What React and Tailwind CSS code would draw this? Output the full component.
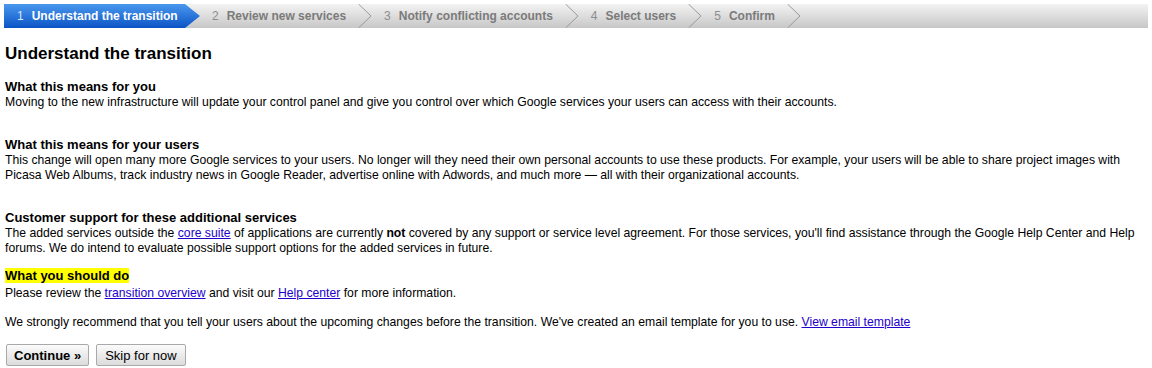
const steps = [
  { n: 1, label: 'Understand the transition' },
  { n: 2, label: 'Review new services' },
  { n: 3, label: 'Notify conflicting accounts' },
  { n: 4, label: 'Select users' },
  { n: 5, label: 'Confirm' },
]

function Chevron() {
  return (
    <svg width="14" height="24" viewBox="0 0 14 24" className="shrink-0">
      <path d="M0.5 0 L13 12 L0.5 24" fill="none" stroke="#9a9a9a" strokeWidth="1" />
    </svg>
  )
}

function Stepper({ current }) {
  return (
    <div className="mx-[4px] mt-[4px] h-[24px] flex items-stretch bg-gradient-to-b from-[#f3f3f3] to-[#c7c7c7] text-[12px] font-bold">
      {steps.map((s) =>
        s.n === current ? (
          <div
            key={s.n}
            className="w-[196px] shrink-0 flex items-center pl-[13px] text-white bg-gradient-to-b from-[#4a98ee] to-[#0a53c5] [clip-path:polygon(0_0,181px_0,196px_50%,181px_100%,0_100%)]"
          >
            <span className="text-[#d6e6ff] font-normal">{s.n}</span>
            <span className="ml-[8px]">{s.label}</span>
          </div>
        ) : (
          <div key={s.n} className="flex items-center">
            <div className="flex items-center px-[12px] text-[#7b7b7b]">
              <span className="text-[#8d8d8d] font-normal">{s.n}</span>
              <span className="ml-[8px]">{s.label}</span>
            </div>
            <Chevron />
          </div>
        )
      )}
    </div>
  )
}

function Link({ children }) {
  return <a href="#" className="text-[#2200cc] underline">{children}</a>
}

export default function App() {
  return (
    <div className="min-h-[368px] bg-white text-black text-[12.2px] leading-[15px] font-['Liberation_Sans',Arial,sans-serif]">
      <Stepper current={1} />

      <div className="px-[5px]">
        <h1 className="mt-[16px] text-[17px] leading-[20px] font-bold">Understand the transition</h1>

        {/* what it means for the admin */}
        <div className="mt-[15px]">
          <h3 className="font-bold text-[13px] leading-[16px]">What this means for you</h3>
          <p>
            Moving to the new infrastructure will update your control panel and give you control over which Google
            services your users can access with their accounts.
          </p>
        </div>

        <div className="mt-[27px]">
          <h3 className="font-bold text-[13px] leading-[16px]">What this means for your users</h3>
          <p>
            This change will open many more Google services to your users. No longer will they need their own personal
            accounts to use these products. For example, your users will be able to share project images with Picasa
            Web Albums, track industry news in Google Reader, advertise online with Adwords, and much more — all with
            their organizational accounts.
          </p>
        </div>

        <div className="mt-[26px]">
          <h3 className="font-bold text-[13px] leading-[17px]">Customer support for these additional services</h3>
          <p>
            The added services outside the <Link>core suite</Link> of applications are currently <b>not</b> covered by
            any support or service level agreement. For those services, you'll find assistance through the Google Help
            Center and Help forums. We do intend to evaluate possible support options for the added services in future.
          </p>
        </div>

        <div className="mt-[12px]">
          <h3 className="font-bold text-[13px] leading-[16px]">
            <span className="bg-[#ffff00]">What you should do</span>
          </h3>
          <p className="mt-[2px]">
            Please review the <Link>transition overview</Link> and visit our <Link>Help center</Link> for more
            information.
          </p>
          <p className="mt-[14px]">
            We strongly recommend that you tell your users about the upcoming changes before the transition. We've
            created an email template for you to use. <Link>View email template</Link>
          </p>
        </div>

        <div className="mt-[14px] flex gap-[7px] pl-[1px]">
          <button className="h-[22px] px-[7px] border border-[#a9a9a9] rounded-[2px] bg-gradient-to-b from-[#fbfbfb] to-[#dcdcdc] font-bold text-[13px]">
            Continue »
          </button>
          <button className="h-[22px] px-[8px] border border-[#a9a9a9] rounded-[2px] bg-gradient-to-b from-[#fbfbfb] to-[#dcdcdc] text-[13px]">
            Skip for now
          </button>
        </div>
      </div>
    </div>
  )
}
